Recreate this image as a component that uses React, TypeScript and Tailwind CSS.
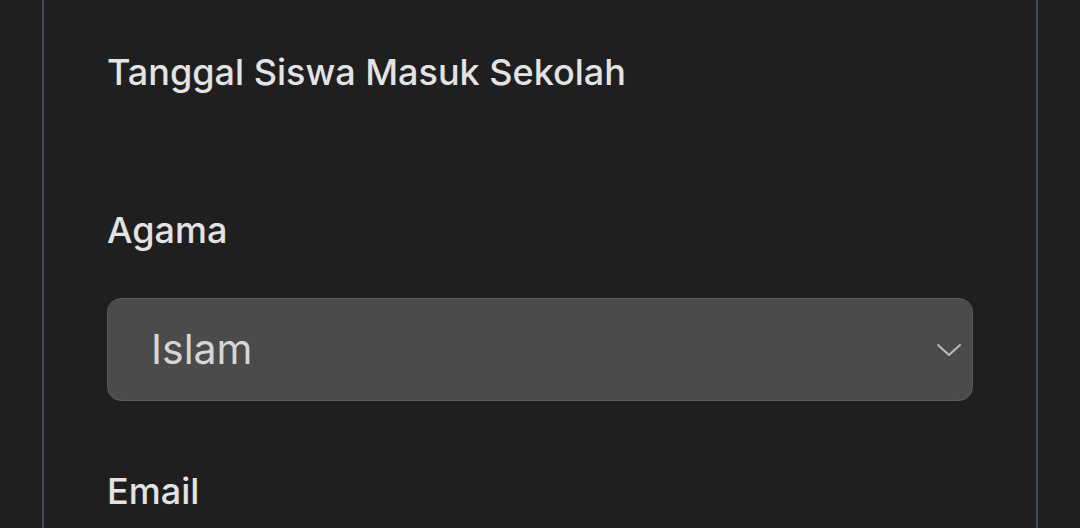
const Field = ({ label }: { label: string }) => (
	<div className="text-[36px] leading-[40px] font-medium text-[#e3e3e3]">{label}</div>
);

export default function App() {
	return (
		<div
			className="min-h-[528px] h-[528px] overflow-hidden bg-[#1e1e1e]"
			style={{ fontFamily: "Inter, 'Open Sans', sans-serif" }}
		>
			<div className="mx-[42px] h-full border-x-2 border-[#3f4b66] bg-[#1f1f1f] pl-[63px] pr-[63px] pt-[52px]">
				<Field label="Tanggal Siswa Masuk Sekolah" />
				<div className="h-[118px]" />
				<Field label="Agama" />
				<div className="mt-[48px] flex h-[103px] items-center justify-between rounded-[14px] border border-[#5a5a5a] bg-[#4b4b4b] pl-[43px] pr-[10px]">
					<span className="text-[41px] text-[#d6d6d6]">Islam</span>
					<svg width="26" height="14" viewBox="0 0 26 14" fill="none">
						<path d="M2 2l11 10L24 2" stroke="#bdbdbd" strokeWidth="2" strokeLinecap="round" strokeLinejoin="round" />
					</svg>
				</div>
				<div className="h-[70px]" />
				<Field label="Email" />
			</div>
		</div>
	);
}
